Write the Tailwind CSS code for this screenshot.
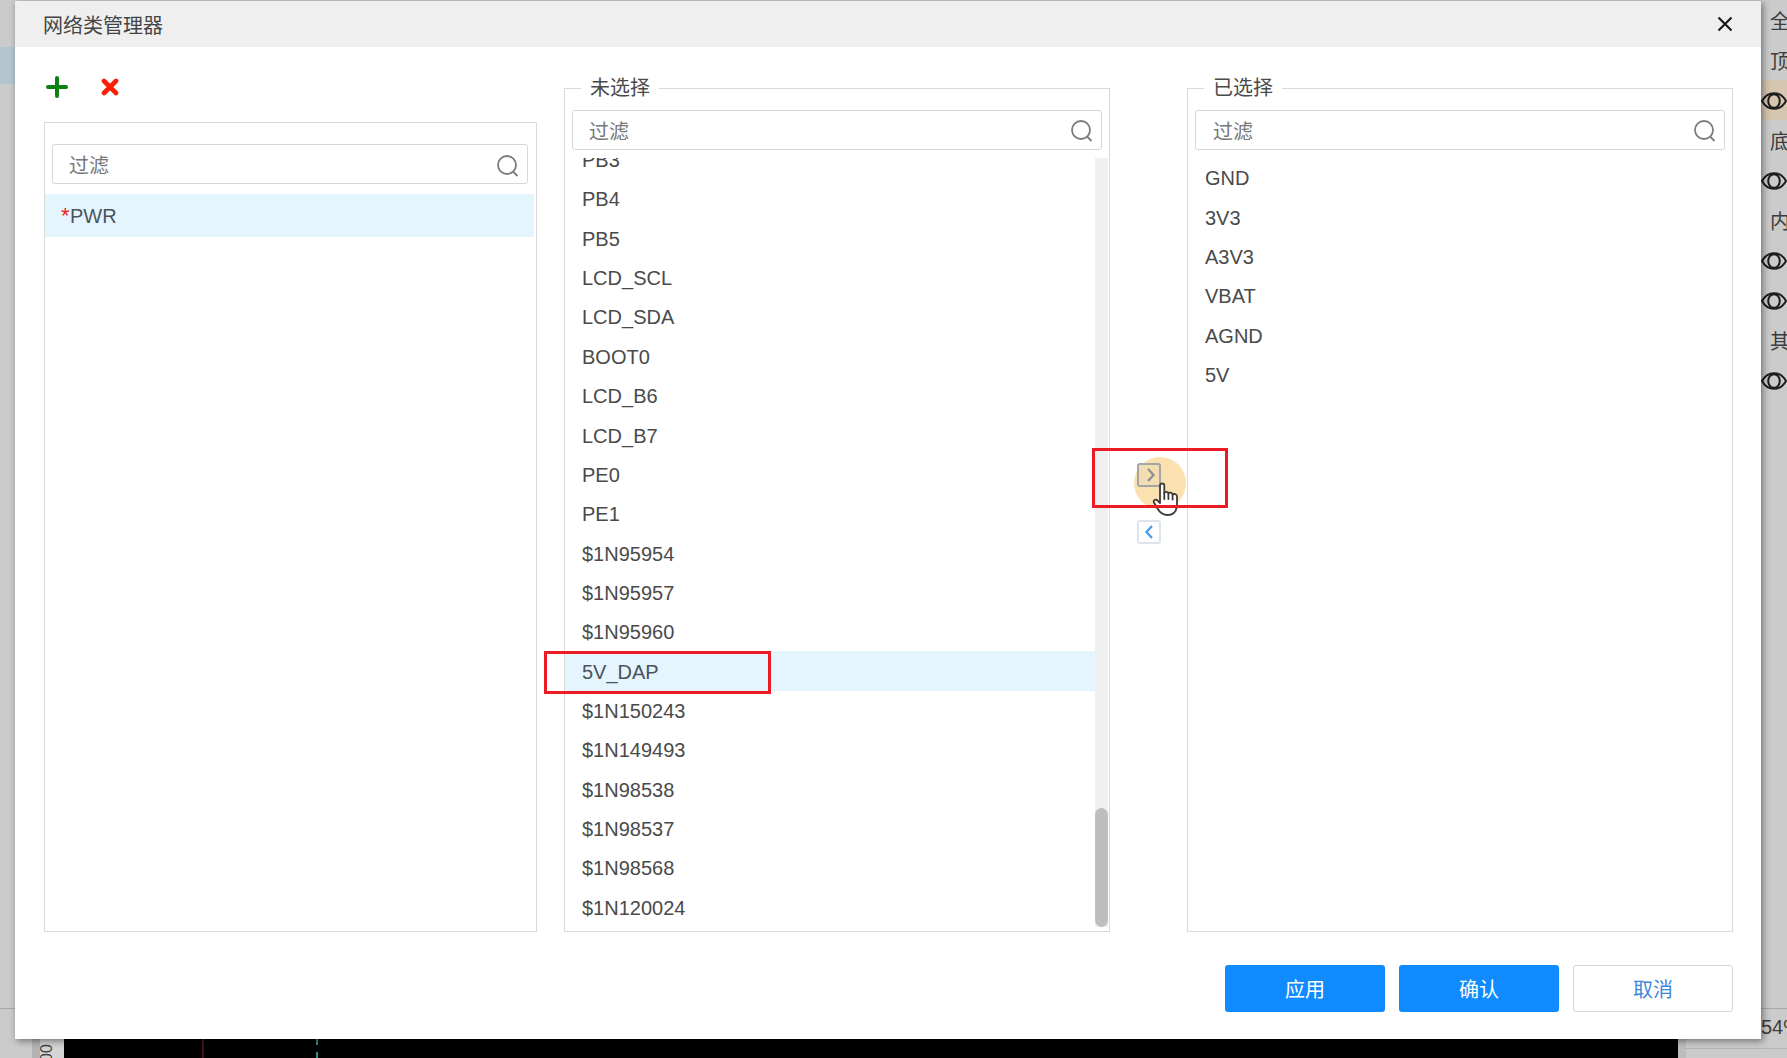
<!DOCTYPE html>
<html lang="zh-CN">
<head>
    <meta charset="UTF-8">
    <meta name="viewport" content="width=device-width, initial-scale=1.0">
    <title>网络类管理器</title>
    <script src="https://cdn.jsdelivr.net/npm/@tailwindcss/browser@4"></script>
</head>
<body class="relative h-[1058px] w-[1787px] overflow-hidden bg-[#cbcbcb] font-['Liberation_Sans','Noto_Sans_CJK_SC',sans-serif] text-[20px] leading-none text-[#4a4a4a]">

    <!-- Icons shared by the page -->
    <svg class="hidden">
        <symbol id="eye" viewBox="0 0 26 18" fill="none" stroke="#1c1c1c" stroke-width="2">
            <path d="M1 9C4 3.6 8 1.2 13 1.2S22 3.6 25 9C22 14.4 18 16.8 13 16.8S4 14.4 1 9Z" />
            <ellipse cx="13" cy="9" rx="5.8" ry="6.8" />
        </symbol>
        <symbol id="search" viewBox="0 0 24 24" fill="none" stroke="#7c7c7c" stroke-width="1.8">
            <circle cx="11" cy="11" r="9" />
            <path d="M17 17.5L21.5 22" />
        </symbol>
    </svg>

    <!-- Editor behind the dialog -->
    <div class="flex h-full flex-col">
        <div class="flex grow justify-between">
            <div class="pt-[47px]">
                <div class="h-[37px] w-4 bg-[#b3c6cf]"></div>
            </div>
            <div id="layers" class="w-[26px] shrink-0 overflow-hidden"></div>
        </div>
        <div class="flex h-[50px] shrink-0 justify-end border-t border-[#a9a9a9]">
            <div class="w-[26px] overflow-hidden pt-[6px] text-[20px] leading-[24px] whitespace-nowrap text-[#3c3c3c]">54%</div>
        </div>
    </div>
    <div class="absolute bottom-0 left-0 flex h-[19px] w-full">
        <div class="ml-8 w-[8px] bg-[#b3b3b3]"></div>
        <div class="relative w-[24px] overflow-hidden bg-[#d4d4d4]">
            <span class="absolute top-[6px] left-[-2px] -rotate-90 text-[16px] text-[#444]">00</span>
        </div>
        <div class="flex w-[1614px] bg-black">
            <div class="ml-[138px] w-[2px] bg-[#45102f]"></div>
            <div class="ml-[112px] border-l-2 border-dashed border-[#2c8f8a]"></div>
        </div>
        <div class="w-[8px] bg-[#bdbdbd]"></div>
        <div class="mt-[9px] grow border-t border-[#b5b5b5]"></div>
    </div>

    <!-- Dialog -->
    <div class="absolute top-px left-[15px] flex h-[1038px] w-[1746px] flex-col bg-white shadow-[2px_2px_7px_rgba(0,0,0,0.45)]">
        <header class="flex h-[46px] shrink-0 items-center justify-between bg-[#efefef] pr-[28px] pl-[28px]">
            <h1 class="pt-[3px] text-[20px] text-[#444]">网络类管理器</h1>
            <svg class="h-4 w-4" viewBox="0 0 16 16" fill="none" stroke="#1a1a1a" stroke-width="2.2">
                <path d="M1.5 1.5L14.5 14.5M14.5 1.5L1.5 14.5" />
            </svg>
        </header>

        <main class="flex h-[885px] pl-[29px]">
            <section class="mr-[27px] flex w-[493px] flex-col">
                <div class="flex h-[75px] items-center gap-[33px] pt-[4px] pl-[2px]">
                    <svg class="h-[22px] w-[22px]" viewBox="0 0 22 22" stroke="#0a8212" stroke-width="4" stroke-linecap="round">
                        <path d="M11 2V20M2 11H20" />
                    </svg>
                    <svg class="h-[18px] w-[18px]" viewBox="0 0 18 18" stroke="#fb2005" stroke-width="4.6" stroke-linecap="round">
                        <path d="M3 3L15 15M15 3L3 15" />
                    </svg>
                </div>
                <div class="grow border border-[#d9d9d9] pt-[21px]">
                    <label class="mr-[8px] ml-[7px] flex h-[40px] items-center justify-between rounded-[3px] border border-[#d6d6d6] pr-[7px] pl-[16px]">
                        <span class="pt-[3px] text-[#777]">过滤</span>
                        <svg class="mt-[3px] h-6 w-6"><use href="#search" /></svg>
                    </label>
                    <div class="mt-[10px] mr-[2px] flex h-[43px] items-center bg-[#e5f5fe] pl-[16px] text-[#4b545c]">
                        <span class="w-[9px] text-[22px] text-[#f02020]">*</span>PWR
                    </div>
                </div>
            </section>

            <section class="relative mt-[41px] flex w-[546px] flex-col border border-[#d9d9d9] pt-[21px]">
                <h2 class="absolute top-[-11px] left-[16px] bg-white px-[9px]">未选择</h2>
                <label class="mx-[7px] flex h-[40px] shrink-0 items-center justify-between rounded-[3px] border border-[#d6d6d6] pr-[7px] pl-[16px]">
                    <span class="pt-[3px] text-[#777]">过滤</span>
                    <svg class="mt-px h-6 w-6"><use href="#search" /></svg>
                </label>
                <div class="mt-[8px] flex h-[769px]">
                    <ul id="unselected" class="flex grow flex-col justify-end overflow-hidden"></ul>
                    <div class="mr-px flex w-[13px] flex-col justify-end bg-[#f0f0f0]">
                        <div class="h-[119px] rounded-full bg-[#bebebe]"></div>
                    </div>
                </div>
            </section>

            <div class="flex w-[77px] flex-col items-center pt-[473px]">
                <button class="flex h-[24px] w-[24px] items-center justify-center rounded-[3px] border-2 border-[#e0e3e8]">
                    <svg class="h-[14px] w-[10px]" viewBox="0 0 10 14" fill="none" stroke="#4b9cf0" stroke-width="2.4">
                        <path d="M8 1L2.5 7L8 13" />
                    </svg>
                </button>
            </div>

            <section class="relative mt-[41px] flex w-[546px] flex-col border border-[#d9d9d9] pt-[21px]">
                <h2 class="absolute top-[-11px] left-[16px] bg-white px-[9px]">已选择</h2>
                <label class="mx-[7px] flex h-[40px] shrink-0 items-center justify-between rounded-[3px] border border-[#d6d6d6] pr-[7px] pl-[17px]">
                    <span class="pt-[3px] text-[#777]">过滤</span>
                    <svg class="mt-px h-6 w-6"><use href="#search" /></svg>
                </label>
                <ul id="selected" class="mt-[8px]"></ul>
            </section>
        </main>

        <footer class="flex justify-end gap-[14px] pt-[33px] pr-[28px]">
            <button class="h-[47px] w-[160px] rounded-[3px] bg-[#0f8bff] pt-[3px] text-white">应用</button>
            <button class="h-[47px] w-[160px] rounded-[3px] bg-[#0f8bff] pt-[3px] text-white">确认</button>
            <button class="h-[47px] w-[160px] rounded-[3px] border border-[#d6d6d6] pt-[3px] text-[#3d86dd]">取消</button>
        </footer>
    </div>

    <!-- Click highlight, pressed button and pointer -->
    <div class="absolute top-[457px] left-[1134px] h-[52px] w-[52px] rounded-full bg-[#fbe0b0]"></div>
    <div class="absolute top-[463px] left-[1137px] flex h-[24px] w-[24px] items-center justify-center rounded-[3px] border-2 border-[#a3a5a6] bg-[#efdcb8]/60">
        <svg class="ml-[4px] h-[14px] w-[10px]" viewBox="0 0 10 14" fill="none" stroke="#8d8f8c" stroke-width="2.2">
            <path d="M2 1L7.5 7L2 13" />
        </svg>
    </div>
    <svg class="absolute top-[482px] left-[1152px] h-[35px] w-[27px]" viewBox="0 0 27 35" fill="#fff" stroke="#403a36" stroke-width="1.8" stroke-linejoin="round" stroke-linecap="round">
        <path d="M8 21V3.5C8 .8 12.3 .8 12.3 3.5V11C13 9.2 16.2 9.4 16.4 11.6C17.2 10 20.4 10.4 20.6 12.8C21.6 11.4 25 11.8 25 14.6V22C25 29 21.5 33 15.5 33C10 33 7.5 30 5.5 26.5L2 20.5C1 18.5 3.5 16.8 5.3 18.3Z" />
        <path d="M12.3 11V17M16.4 12V17M20.6 13V17.5" fill="none" />
    </svg>

    <!-- Annotation boxes -->
    <div class="absolute top-[448px] left-[1092px] h-[60px] w-[136px] border-3 border-[#ed1c24]"></div>
    <div class="absolute top-[651px] left-[544px] h-[43px] w-[227px] border-3 border-[#ed1c24]"></div>

    <script>
        const unselected = [
            "PB3", "PB4", "PB5", "LCD_SCL", "LCD_SDA", "BOOT0", "LCD_B6", "LCD_B7", "PE0", "PE1",
            "$1N95954", "$1N95957", "$1N95960", "5V_DAP", "$1N150243", "$1N149493",
            "$1N98538", "$1N98537", "$1N98568", "$1N120024"
        ];
        const selected = ["GND", "3V3", "A3V3", "VBAT", "AGND", "5V"];
        const layers = ["全", "顶", "eye-active", "底", "eye", "内", "eye", "eye", "其", "eye"];

        function renderNets(id, nets, active) {
            document.getElementById(id).innerHTML = nets.map(net => {
                const highlight = net === active ? "bg-[#e5f5fe] text-[#4b545c]" : "";
                return `<li class="flex h-[39.36px] shrink-0 items-center pt-px pl-[17px] ${highlight}">${net}</li>`;
            }).join("");
        }

        renderNets("unselected", unselected, "5V_DAP");
        renderNets("selected", selected);

        document.getElementById("layers").innerHTML = layers.map(layer => {
            if (layer.startsWith("eye")) {
                const bg = layer === "eye-active" ? "bg-[#d6c6b0]" : "";
                return `<div class="flex h-10 items-center pt-px ${bg}"><svg class="h-[18px] w-[26px]"><use href="#eye" /></svg></div>`;
            }
            return `<div class="flex h-10 items-center pt-[4px] pl-[9px] whitespace-nowrap text-[#3c3c3c]">${layer}</div>`;
        }).join("");
    </script>

</body>
</html>
